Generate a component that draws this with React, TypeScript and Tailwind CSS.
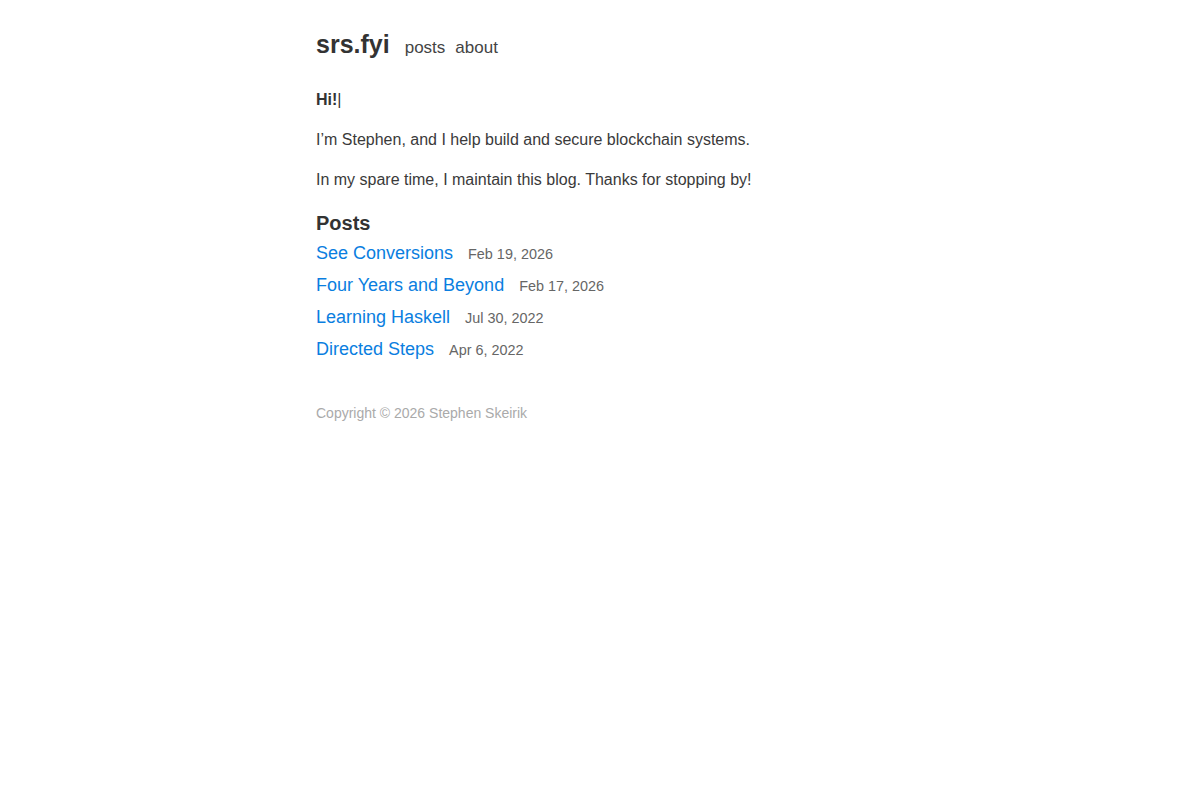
const posts = [
  { title: 'See Conversions', date: 'Feb 19, 2026' },
  { title: 'Four Years and Beyond', date: 'Feb 17, 2026' },
  { title: 'Learning Haskell', date: 'Jul 30, 2022' },
  { title: 'Directed Steps', date: 'Apr 6, 2022' },
];

export default function App() {
  return (
    <div className="min-h-screen bg-white text-[#333] font-['Liberation_Sans',Arial,sans-serif]">
      <div className="mx-auto w-[568px] pt-[24px]">
        {/* Header */}
        <header className="flex items-baseline">
          <a href="#" className="text-[25px] font-bold leading-[40px] text-[#333]">srs.fyi</a>
          <nav className="ml-[15px] flex gap-[10px] text-[17px] text-[#444]">
            <a href="#">posts</a>
            <a href="#">about</a>
          </nav>
        </header>

        {/* Intro */}
        <div className="mt-[24px] text-[16px] leading-[24px] text-[#3a3a3a]">
          <p className="font-bold text-[#333]">
            Hi!<span className="font-normal">|</span>
          </p>
          <p className="mt-[16px]">I’m Stephen, and I help build and secure blockchain systems.</p>
          <p className="mt-[16px]">In my spare time, I maintain this blog. Thanks for stopping by!</p>
        </div>

        {/* Posts */}
        <h2 className="mt-[17px] text-[20px] font-bold leading-[28px]">Posts</h2>
        <ul>
          {posts.map((p) => (
            <li key={p.title} className="flex items-baseline h-[32px] leading-[32px]">
              <a href="#" className="text-[18px] text-[#0a7ee0]">{p.title}</a>
              <span className="ml-[15px] text-[14.4px] text-[#666]">{p.date}</span>
            </li>
          ))}
        </ul>

        <footer className="mt-[38px] text-[14px] leading-[20px] text-[#aaa]">
          Copyright © 2026 Stephen Skeirik
        </footer>
      </div>
    </div>
  );
}
